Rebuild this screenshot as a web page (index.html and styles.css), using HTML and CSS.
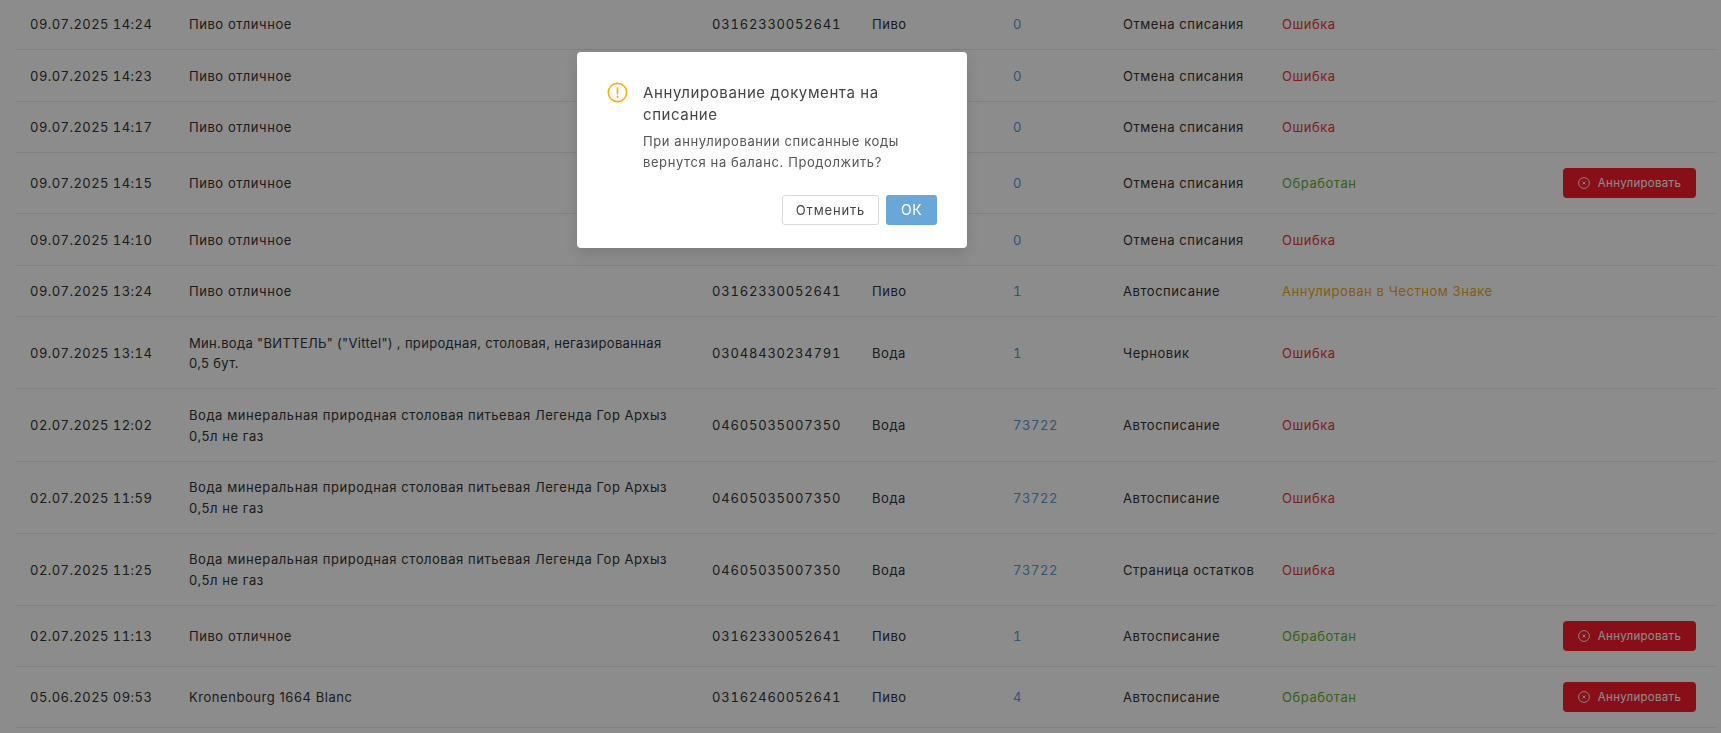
FILE: index.html
```html
<!DOCTYPE html>
<html lang="ru">
<head>
<meta charset="utf-8">
<title>Документы на списание</title>
<link rel="stylesheet" href="styles.css">
</head>
<body>
<main class="page">
<table class="docs">
<tbody>
<tr><td class="digits date">09.07.2025 14:24</td><td class="name">Пиво отличное</td><td class="digits code">03162330052641</td><td>Пиво</td><td class="digits num">0</td><td>Отмена списания</td><td class="err">Ошибка</td><td></td></tr>
<tr><td class="digits date">09.07.2025 14:23</td><td class="name">Пиво отличное</td><td class="digits code">03162330052641</td><td>Пиво</td><td class="digits num">0</td><td>Отмена списания</td><td class="err">Ошибка</td><td></td></tr>
<tr><td class="digits date">09.07.2025 14:17</td><td class="name">Пиво отличное</td><td class="digits code">03162330052641</td><td>Пиво</td><td class="digits num">0</td><td>Отмена списания</td><td class="err">Ошибка</td><td></td></tr>
<tr><td class="digits date">09.07.2025 14:15</td><td class="name">Пиво отличное</td><td class="digits code">03162330052641</td><td>Пиво</td><td class="digits num">0</td><td>Отмена списания</td><td class="ok">Обработан</td><td class="act"><button class="annul"><svg class="annul-ico" viewBox="0 0 12 12"><circle cx="6" cy="6" r="5.4"/><path d="M4.4 4.4l3.2 3.2M7.6 4.4l-3.2 3.2"/></svg>Аннулировать</button></td></tr>
<tr><td class="digits date">09.07.2025 14:10</td><td class="name">Пиво отличное</td><td class="digits code">03162330052641</td><td>Пиво</td><td class="digits num">0</td><td>Отмена списания</td><td class="err">Ошибка</td><td></td></tr>
<tr><td class="digits date">09.07.2025 13:24</td><td class="name">Пиво отличное</td><td class="digits code">03162330052641</td><td>Пиво</td><td class="digits num">1</td><td>Автосписание</td><td class="warn">Аннулирован в Честном Знаке</td><td></td></tr>
<tr><td class="digits date">09.07.2025 13:14</td><td class="name tight">Мин.вода "ВИТТЕЛЬ" ("Vittel") , природная, столовая, негазированная 0,5 бут.</td><td class="digits code">03048430234791</td><td>Вода</td><td class="digits num">1</td><td>Черновик</td><td class="err">Ошибка</td><td></td></tr>
<tr><td class="digits date">02.07.2025 12:02</td><td class="name">Вода минеральная природная столовая питьевая Легенда Гор Архыз 0,5л не газ</td><td class="digits code">04605035007350</td><td>Вода</td><td class="digits num">73722</td><td>Автосписание</td><td class="err">Ошибка</td><td></td></tr>
<tr><td class="digits date">02.07.2025 11:59</td><td class="name">Вода минеральная природная столовая питьевая Легенда Гор Архыз 0,5л не газ</td><td class="digits code">04605035007350</td><td>Вода</td><td class="digits num">73722</td><td>Автосписание</td><td class="err">Ошибка</td><td></td></tr>
<tr><td class="digits date">02.07.2025 11:25</td><td class="name">Вода минеральная природная столовая питьевая Легенда Гор Архыз 0,5л не газ</td><td class="digits code">04605035007350</td><td>Вода</td><td class="digits num">73722</td><td>Страница остатков</td><td class="err">Ошибка</td><td></td></tr>
<tr><td class="digits date">02.07.2025 11:13</td><td class="name">Пиво отличное</td><td class="digits code">03162330052641</td><td>Пиво</td><td class="digits num">1</td><td>Автосписание</td><td class="ok">Обработан</td><td class="act"><button class="annul"><svg class="annul-ico" viewBox="0 0 12 12"><circle cx="6" cy="6" r="5.4"/><path d="M4.4 4.4l3.2 3.2M7.6 4.4l-3.2 3.2"/></svg>Аннулировать</button></td></tr>
<tr><td class="digits date">05.06.2025 09:53</td><td class="name">Kronenbourg 1664 Blanc</td><td class="digits code">03162460052641</td><td>Пиво</td><td class="digits num">4</td><td>Автосписание</td><td class="ok">Обработан</td><td class="act"><button class="annul"><svg class="annul-ico" viewBox="0 0 12 12"><circle cx="6" cy="6" r="5.4"/><path d="M4.4 4.4l3.2 3.2M7.6 4.4l-3.2 3.2"/></svg>Аннулировать</button></td></tr>
</tbody>
</table>
</main>
<div class="mask"></div>
<div class="wrap">
<section class="modal" role="dialog">
<div class="modal-body">
<svg class="warn-ico" viewBox="0 0 22 22"><circle cx="11" cy="11" r="9.6"/><path d="M11 6v6.4"/><path d="M11 15v1.2"/></svg>
<div class="modal-text">
<h2 class="modal-title">Аннулирование документа на списание</h2>
<p class="modal-msg">При аннулировании списанные коды вернутся на баланс. Продолжить?</p>
</div>
</div>
<div class="modal-btns">
<button class="btn-cancel">Отменить</button>
<button class="btn-ok">ОК</button>
</div>
</section>
</div>
</body>
</html>
```
FILE: styles.css
```css
* { box-sizing: border-box; }
html, body { margin: 0; height: 100%; overflow: hidden; background: #fff; }
body { font-family: "Inter", "Noto Sans", sans-serif; font-size: 13px; line-height: 20.6px; color: #333; letter-spacing: .55px; }
.page { padding: 0 4px 0 15px; margin-top: -1.6px; }
.docs, .docs tbody { display: block; }
.docs { width: 1702px; }
.docs tr { display: grid; grid-template-columns: 159px 523px 160px 141px 110px 159px 296px 154px; align-items: center; border-bottom: 1px solid #eaeaea; }
.docs td { display: block; padding: 15.6px 0 14.4px 15px; }
.docs td.name { padding-right: 25px; }
.digits { font-variant-numeric: tabular-nums; }
.date { letter-spacing: .45px; }
.code { letter-spacing: .8px; }
.tight { letter-spacing: .33px; }
.docs td.act { padding: 15px 21px 15px 0; display: flex; justify-content: flex-end; }
.num { color: #5b9bd5; letter-spacing: .6px; }
.err { color: #e53935; }
.ok { color: #63b02c; }
.warn { color: #efa81f; }
.annul { display: inline-flex; align-items: center; justify-content: center; gap: 8px; width: 133px; height: 30px; padding: 0; border: 0; border-radius: 4px; background: #f81d2c; color: #fff; font: inherit; font-size: 11.5px; letter-spacing: .3px; }
.annul-ico { width: 12px; height: 12px; fill: none; stroke: #fff; stroke-width: .9; }
.mask { position: fixed; inset: 0; background: rgba(0, 0, 0, .45); }
.wrap { position: fixed; inset: 0; display: flex; align-items: flex-start; padding: 52px 0 0 577px; }
.modal { width: 390px; height: 196px; padding: 30px 30px 23px; background: #fff; border-radius: 4px; box-shadow: 0 6px 16px rgba(0, 0, 0, .12); display: flex; flex-direction: column; justify-content: space-between; }
.modal-body { display: flex; gap: 15px; }
.warn-ico { flex: none; width: 21px; height: 21px; fill: none; stroke: #faad14; stroke-width: 1.7; stroke-linecap: round; }
.modal-title { margin: 0 0 6px; font-size: 15px; line-height: 21.5px; font-weight: 400; letter-spacing: .6px; color: #444; }
.modal-msg { margin: 0; color: #555; letter-spacing: .6px; }
.modal-btns { display: flex; justify-content: flex-end; gap: 7px; }
.btn-cancel, .btn-ok { height: 30px; padding: 0; border-radius: 3px; font: inherit; }
.btn-cancel { width: 97px; background: #fff; border: 1px solid #d9d9d9; color: #444; letter-spacing: .85px; }
.btn-ok { width: 51px; background: #6aa7d9; border: 0; color: #fff; font-size: 14px; letter-spacing: .5px; }
```
